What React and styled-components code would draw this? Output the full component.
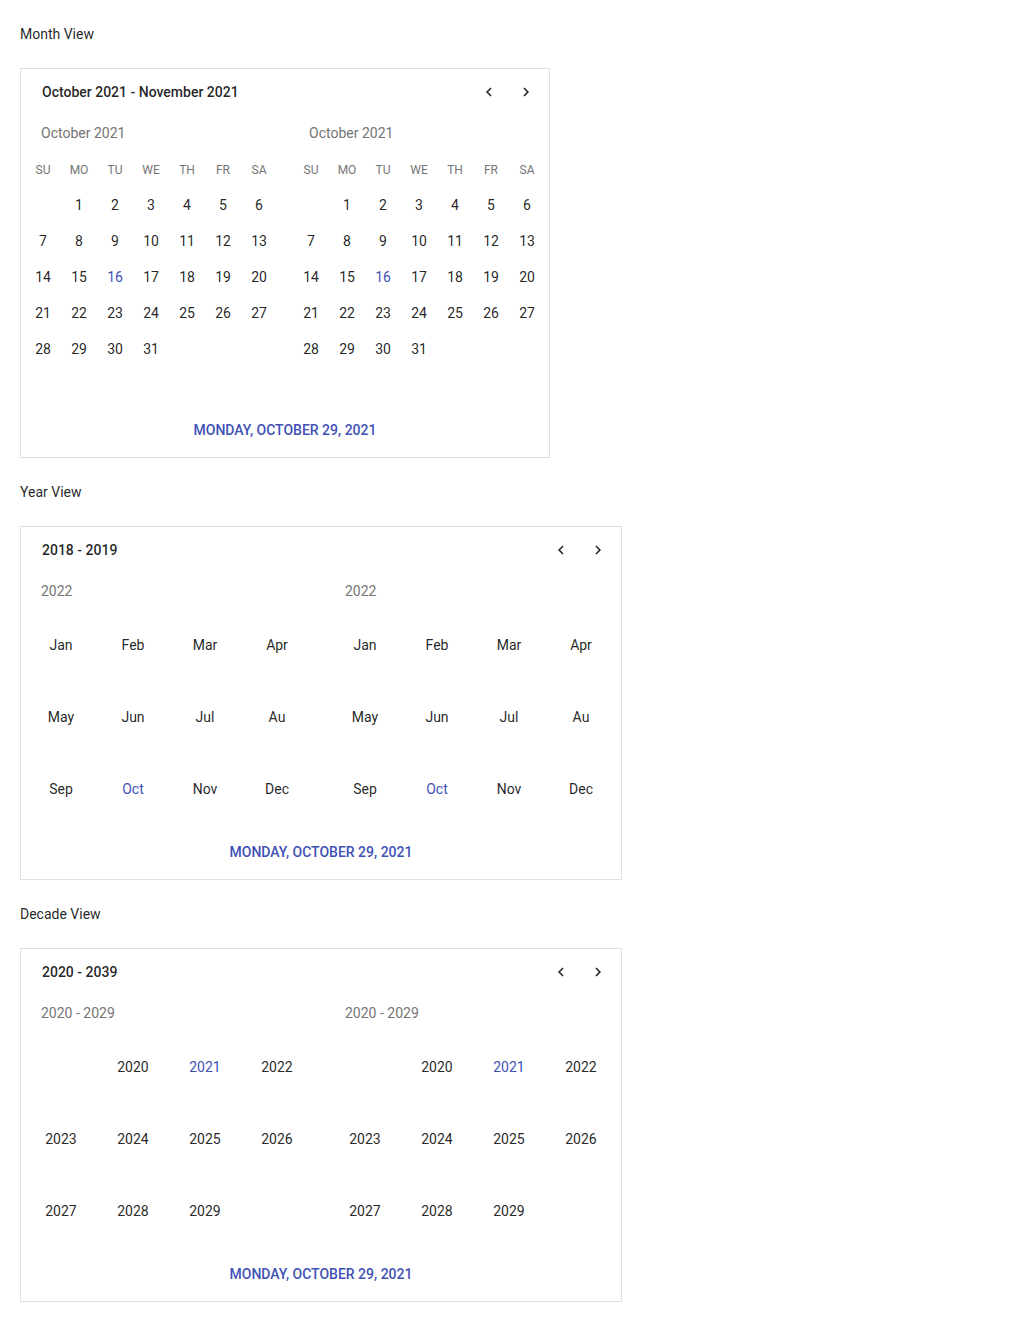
import React from 'react';
import styled, { createGlobalStyle } from 'styled-components';

const colors = {
  text: 'rgba(0,0,0,.87)',
  muted: '#757575',
  border: '#e0e0e0',
  primary: '#3f51b5',
};

const GlobalStyle = createGlobalStyle`
  body {
    margin: 0;
    background: #fff;
    font-family: Roboto, "Liberation Sans", sans-serif;
    color: ${colors.text};
  }
`;

const Page = styled.div`
  display: flex;
  flex-direction: column;
  align-items: flex-start;
  padding: 0 20px;
`;

const SectionLabel = styled.div`
  font-size: 14px;
  line-height: 20px;
  margin: 24px 0;
`;

const Card = styled.div`
  border: 1px solid ${colors.border};
  background: #fff;
  display: flex;
  flex-direction: column;
`;

const Header = styled.div`
  height: 47px;
  box-sizing: border-box;
  display: flex;
  align-items: center;
  padding: 0 5px 2px 21px;
`;

const HeaderTitle = styled.div`
  flex: 1;
  font-size: 14px;
  font-weight: 500;
`;

const NavButton = styled.button`
  width: 37px;
  height: 36px;
  border: 0;
  padding: 0;
  background: transparent;
  display: flex;
  align-items: center;
  justify-content: center;
  color: ${colors.text};
  cursor: pointer;
`;

const Panels = styled.div`
  display: flex;
  gap: 16px;
  padding: 0 4px;
`;

const Panel = styled.div`
  display: flex;
  flex-direction: column;
`;

const PanelTitle = styled.div`
  height: 35px;
  line-height: 35px;
  padding-left: 16px;
  font-size: 14px;
  color: ${colors.muted};
`;

const Grid = styled.div`
  display: grid;
  grid-template-columns: repeat(${p => p.$cols}, ${p => p.$size}px);
  grid-auto-rows: ${p => p.$size}px;
`;

const WeekDay = styled.div`
  height: 36px;
  box-sizing: border-box;
  padding-top: 2px;
  display: flex;
  align-items: center;
  justify-content: center;
  font-size: 12px;
  color: ${colors.muted};
`;

const Cell = styled.div`
  display: flex;
  align-items: center;
  justify-content: center;
  font-size: 14px;
  color: ${p => (p.$active ? colors.primary : colors.text)};
`;

const Footer = styled.div`
  height: 54px;
  display: flex;
  align-items: center;
  justify-content: center;
  font-size: 14px;
  font-weight: 500;
  color: ${colors.primary};
`;

const Chevron = ({ dir }) => (
  <svg width="18" height="18" viewBox="0 0 24 24" fill="currentColor">
    {dir === 'left'
      ? <path d="M15.41 7.41L14 6l-6 6 6 6 1.41-1.41L10.83 12z" />
      : <path d="M8.59 16.59L10 18l6-6-6-6-1.41 1.41L13.17 12z" />}
  </svg>
);

const CalendarCard = ({ title, children }) => (
  <Card>
    <Header>
      <HeaderTitle>{title}</HeaderTitle>
      <NavButton><Chevron dir="left" /></NavButton>
      <NavButton><Chevron dir="right" /></NavButton>
    </Header>
    <Panels>{children}</Panels>
    <Footer>MONDAY, OCTOBER 29, 2021</Footer>
  </Card>
);

const weekDays = ['SU', 'MO', 'TU', 'WE', 'TH', 'FR', 'SA'];
const days = [null, ...Array.from({ length: 31 }, (_, i) => i + 1)];
const months = ['Jan', 'Feb', 'Mar', 'Apr', 'May', 'Jun', 'Jul', 'Au', 'Sep', 'Oct', 'Nov', 'Dec'];
const years = [null, ...Array.from({ length: 10 }, (_, i) => 2020 + i)];

const MonthPanel = () => (
  <Panel>
    <PanelTitle>October 2021</PanelTitle>
    <Grid $cols={7} $size={36}>
      {weekDays.map(d => <WeekDay key={d}>{d}</WeekDay>)}
    </Grid>
    <Grid $cols={7} $size={36} style={{ height: 216 }}>
      {days.map((d, i) => <Cell key={i} $active={d === 16}>{d}</Cell>)}
    </Grid>
  </Panel>
);

const YearPanel = () => (
  <Panel>
    <PanelTitle>2022</PanelTitle>
    <Grid $cols={4} $size={72}>
      {months.map(m => <Cell key={m} $active={m === 'Oct'}>{m}</Cell>)}
    </Grid>
  </Panel>
);

const DecadePanel = () => (
  <Panel>
    <PanelTitle>2020 - 2029</PanelTitle>
    <Grid $cols={4} $size={72}>
      {years.map((y, i) => <Cell key={i} $active={y === 2021}>{y}</Cell>)}
    </Grid>
  </Panel>
);

const App = () => (
  <Page>
    <GlobalStyle />
    <SectionLabel>Month View</SectionLabel>
    <CalendarCard title="October 2021 - November 2021">
      <MonthPanel />
      <MonthPanel />
    </CalendarCard>
    <SectionLabel>Year View</SectionLabel>
    <CalendarCard title="2018 - 2019">
      <YearPanel />
      <YearPanel />
    </CalendarCard>
    <SectionLabel>Decade View</SectionLabel>
    <CalendarCard title="2020 - 2039">
      <DecadePanel />
      <DecadePanel />
    </CalendarCard>
  </Page>
);

export default App;
